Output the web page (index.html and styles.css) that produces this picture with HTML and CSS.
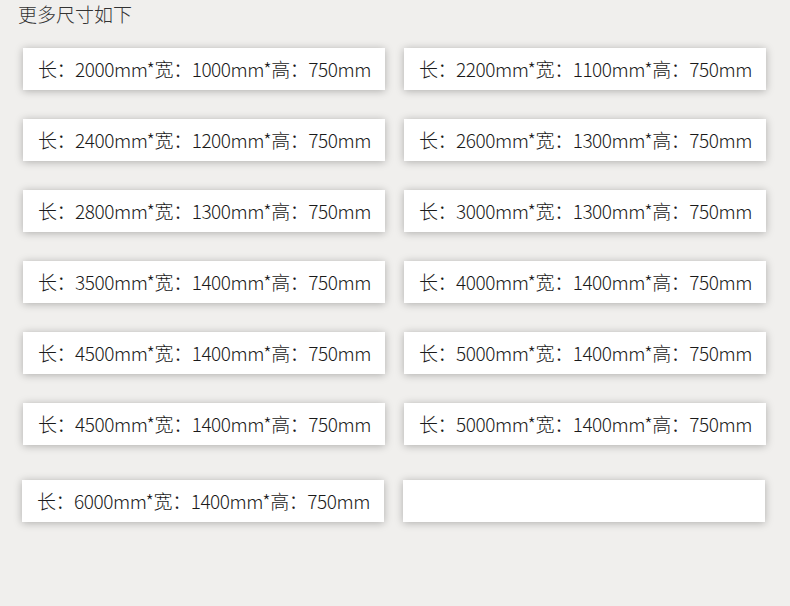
FILE: index.html
```html
<!DOCTYPE html>
<html lang="zh-CN">
<head>
<meta charset="utf-8">
<title>更多尺寸如下</title>
<link rel="stylesheet" href="styles.css">
</head>
<body>
<div class="page">
  <h1 class="title">更多尺寸如下</h1>
  <div class="grid">
    <div class="card">长：2000mm*宽：1000mm*高：750mm</div>
    <div class="card">长：2200mm*宽：1100mm*高：750mm</div>
    <div class="card">长：2400mm*宽：1200mm*高：750mm</div>
    <div class="card">长：2600mm*宽：1300mm*高：750mm</div>
    <div class="card">长：2800mm*宽：1300mm*高：750mm</div>
    <div class="card">长：3000mm*宽：1300mm*高：750mm</div>
    <div class="card">长：3500mm*宽：1400mm*高：750mm</div>
    <div class="card">长：4000mm*宽：1400mm*高：750mm</div>
    <div class="card">长：4500mm*宽：1400mm*高：750mm</div>
    <div class="card">长：5000mm*宽：1400mm*高：750mm</div>
    <div class="card">长：4500mm*宽：1400mm*高：750mm</div>
    <div class="card">长：5000mm*宽：1400mm*高：750mm</div>
  </div>
  <div class="grid grid-last">
    <div class="card">长：6000mm*宽：1400mm*高：750mm</div>
    <div class="card"></div>
  </div>
</div>
</body>
</html>
```
FILE: styles.css
```css
html, body {
  margin: 0;
  padding: 0;
  background: #f0efed;
}
.page {
  width: 790px;
  height: 606px;
  font-family: "Noto Sans CJK SC", "Noto Sans", sans-serif;
  color: #222;
}
.title {
  margin: 0;
  padding: 2px 0 0 18px;
  height: 48px;
  box-sizing: border-box;
  font-size: 19px;
  font-weight: 300;
  line-height: 24px;
  color: #333;
}
.grid {
  display: grid;
  grid-template-columns: 362px 362px;
  column-gap: 19px;
  row-gap: 29px;
  padding-left: 23px;
}
.grid-last {
  margin-top: 35px;
  padding-left: 22px;
}
.card {
  height: 42px;
  background: #fff;
  box-shadow: 0 1px 8px rgba(0, 0, 0, 0.28);
  box-sizing: border-box;
  padding-left: 15px;
  font-size: 19px;
  font-weight: 200;
  line-height: 42px;
  letter-spacing: -0.45px;
  color: #1a1a1a;
  white-space: nowrap;
}
```
